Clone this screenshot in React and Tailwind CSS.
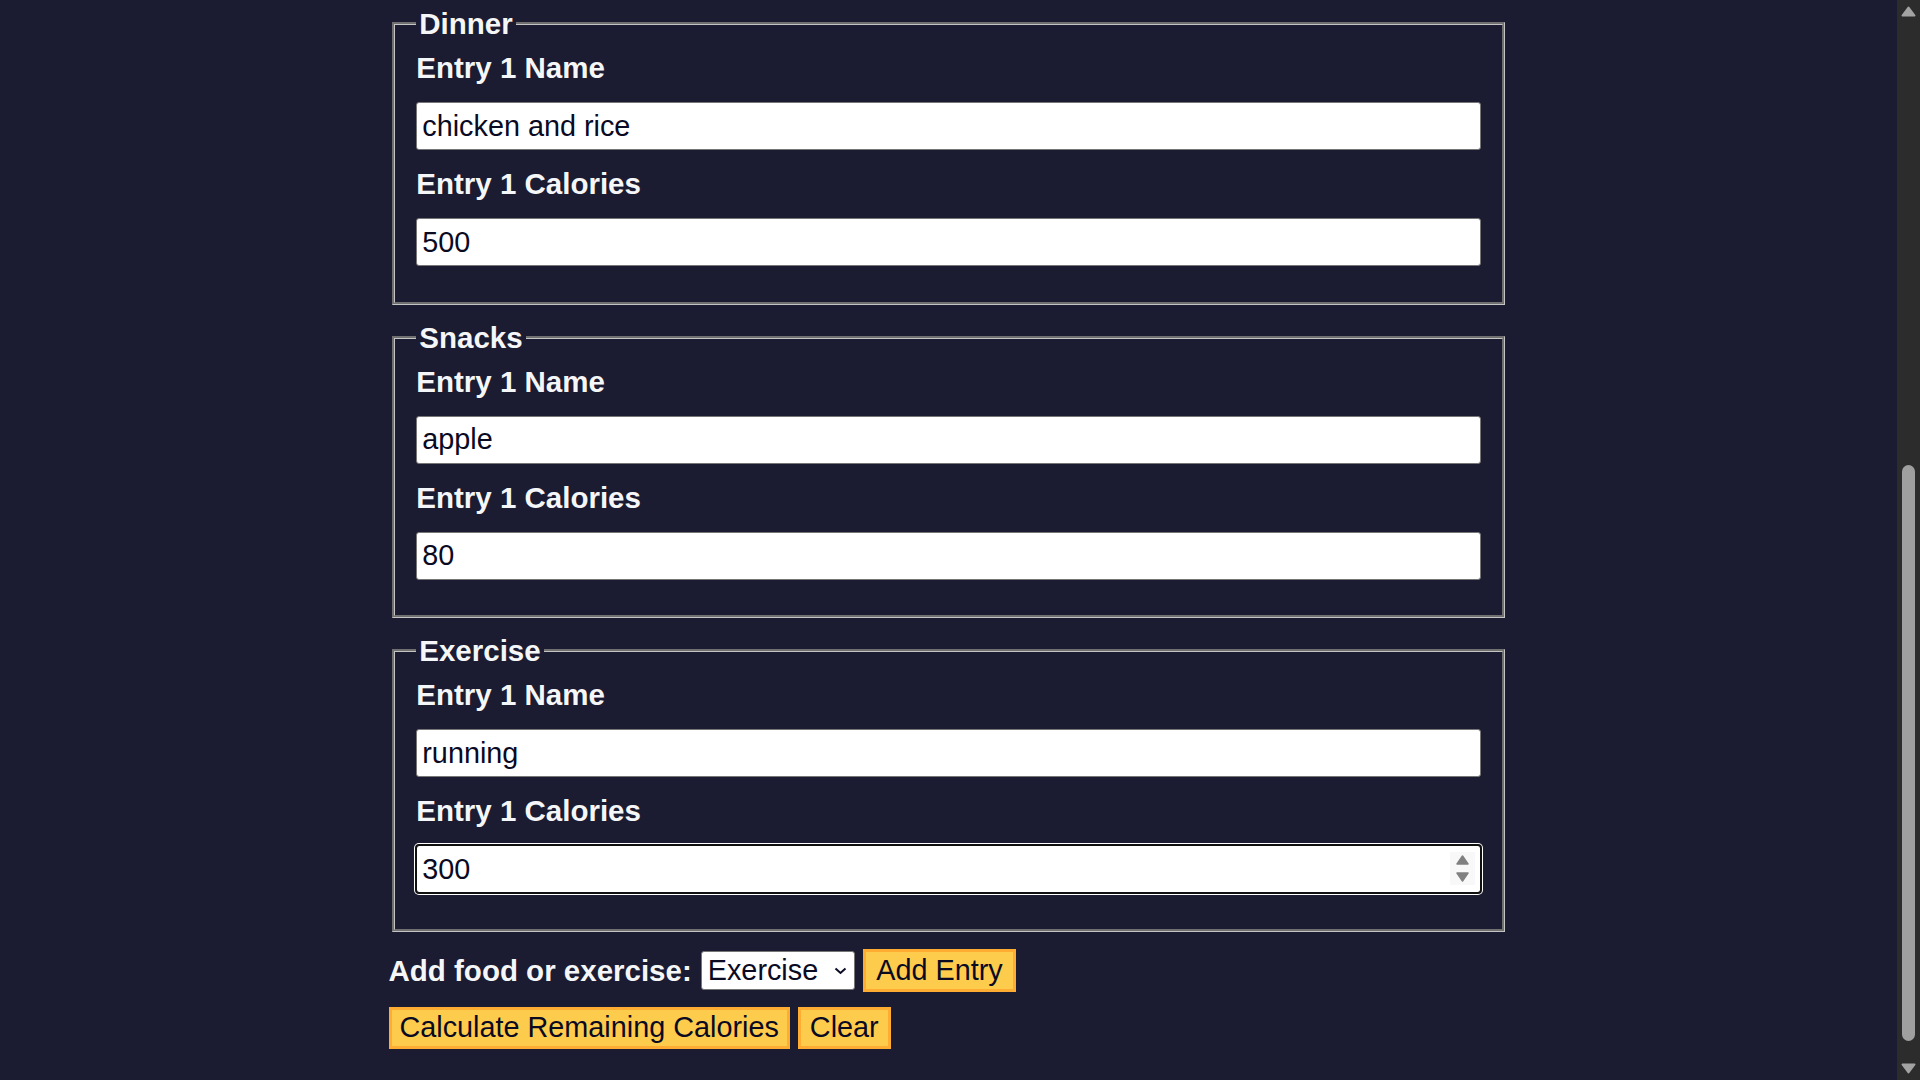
import { useState } from 'react';

const sections = [
  { name: 'Dinner', entry: 'chicken and rice', cal: '500' },
  { name: 'Snacks', entry: 'apple', cal: '80' },
  { name: 'Exercise', entry: 'running', cal: '300', focused: true },
];

function Spinner() {
  return (
    <div className="absolute right-[6px] top-[7px] bottom-[8px] w-[25px] bg-[#f8f8f8] flex flex-col items-center justify-center gap-[7px] pointer-events-none">
      <svg width="13" height="10" viewBox="0 0 13 10">
        <path d="M6.5 1 L12 9 L1 9 Z" fill="#808080" stroke="#808080" strokeWidth="1.5" strokeLinejoin="round" />
      </svg>
      <svg width="13" height="10" viewBox="0 0 13 10">
        <path d="M1 1 L12 1 L6.5 9 Z" fill="#808080" stroke="#808080" strokeWidth="1.5" strokeLinejoin="round" />
      </svg>
    </div>
  );
}

function Entry({ label, value, focused }) {
  const base = 'w-full h-[48px] px-[5px] bg-white text-[#0a0a23] text-[28.8px] border-[1.5px] border-[#767676] rounded-[3px]';
  return (
    <>
      <label className="block font-bold text-[29.5px] leading-[35px] mb-[17px]">{label}</label>
      <div className="relative mb-[16px]">
        <input
          type="text"
          defaultValue={value}
          className={focused ? base + ' outline-2 outline-[#101010] outline-offset-[-1px] shadow-[0_0_0_2px_#ffffff]' : base + ' outline-none'}
        />
        {focused && <Spinner />}
      </div>
    </>
  );
}

function Scrollbar() {
  return (
    <div className="w-[23px] shrink-0 bg-[#2c2c2c] flex flex-col items-center pt-[6px]">
      <svg width="15" height="11" viewBox="0 0 15 11">
        <path d="M7.5 1.5 L13.5 9.5 L1.5 9.5 Z" fill="#a3a3a3" stroke="#a3a3a3" strokeWidth="2" strokeLinejoin="round" />
      </svg>
      <div className="mt-[448px] w-[13px] h-[576px] rounded-full bg-[#9f9f9f]" />
      <svg className="mt-[22px]" width="15" height="11" viewBox="0 0 15 11">
        <path d="M1.5 1.5 L13.5 1.5 L7.5 9.5 Z" fill="#a3a3a3" stroke="#a3a3a3" strokeWidth="2" strokeLinejoin="round" />
      </svg>
    </div>
  );
}

export default function App() {
  const [kind, setKind] = useState('exercise');

  return (
    <div className="h-[1080px] overflow-hidden flex bg-[#1b1b32] text-[#f5f6f7] font-['Liberation_Sans',Arial,sans-serif]">
      <div className="flex-1 min-w-0">
        <div className="w-[1120px] mx-auto pt-[7px]">
          {sections.map((s) => (
            <fieldset key={s.name} className="mx-[3.2px] mb-[16px] px-[21.6px] pt-[10px] pb-[19.5px] [border:3.2px_groove_#c4c4c4]">
              <legend className="px-[3px] font-bold text-[29.5px] leading-[33px]">{s.name}</legend>
              <Entry label="Entry 1 Name" value={s.entry} />
              <Entry label="Entry 1 Calories" value={s.cal} focused={s.focused} />
            </fieldset>
          ))}

          <div className="flex items-center gap-[8px] pt-[1px]">
            <label className="font-bold text-[29.5px] leading-[35px] mr-[1px]">Add food or exercise:</label>
            <div className="relative">
              <select
                value={kind}
                onChange={(e) => setKind(e.target.value)}
                className="appearance-none block w-[154px] h-[39px] pl-[6px] py-0 leading-[33px] bg-white text-[#0a0a23] text-[28.8px] border-[1.5px] border-[#767676] rounded-[3px] outline-none"
              >
                <option value="breakfast">Breakfast</option>
                <option value="lunch">Lunch</option>
                <option value="dinner">Dinner</option>
                <option value="snacks">Snacks</option>
                <option value="exercise">Exercise</option>
              </select>
              <svg className="absolute right-[8px] top-[16px] pointer-events-none" width="13" height="8" viewBox="0 0 13 8">
                <path d="M1.5 1.5 L6.5 6 L11.5 1.5" fill="none" stroke="#0a0a23" strokeWidth="2" />
              </svg>
            </div>
            <button className="h-[43px] px-[10.5px] bg-[#fecc4c] border-[3.2px] border-[#feac32] text-[#0a0a23] text-[28.8px] leading-none">
              Add Entry
            </button>
          </div>

          <div className="flex gap-[8px] mt-[15px]">
            <button className="h-[42px] px-[8px] bg-[#fecc4c] border-[3.2px] border-[#feac32] text-[#0a0a23] text-[28.8px] leading-none">
              Calculate Remaining Calories
            </button>
            <button className="h-[42px] px-[9px] bg-[#fecc4c] border-[3.2px] border-[#feac32] text-[#0a0a23] text-[28.8px] leading-none">
              Clear
            </button>
          </div>
        </div>
      </div>
      <Scrollbar />
    </div>
  );
}
